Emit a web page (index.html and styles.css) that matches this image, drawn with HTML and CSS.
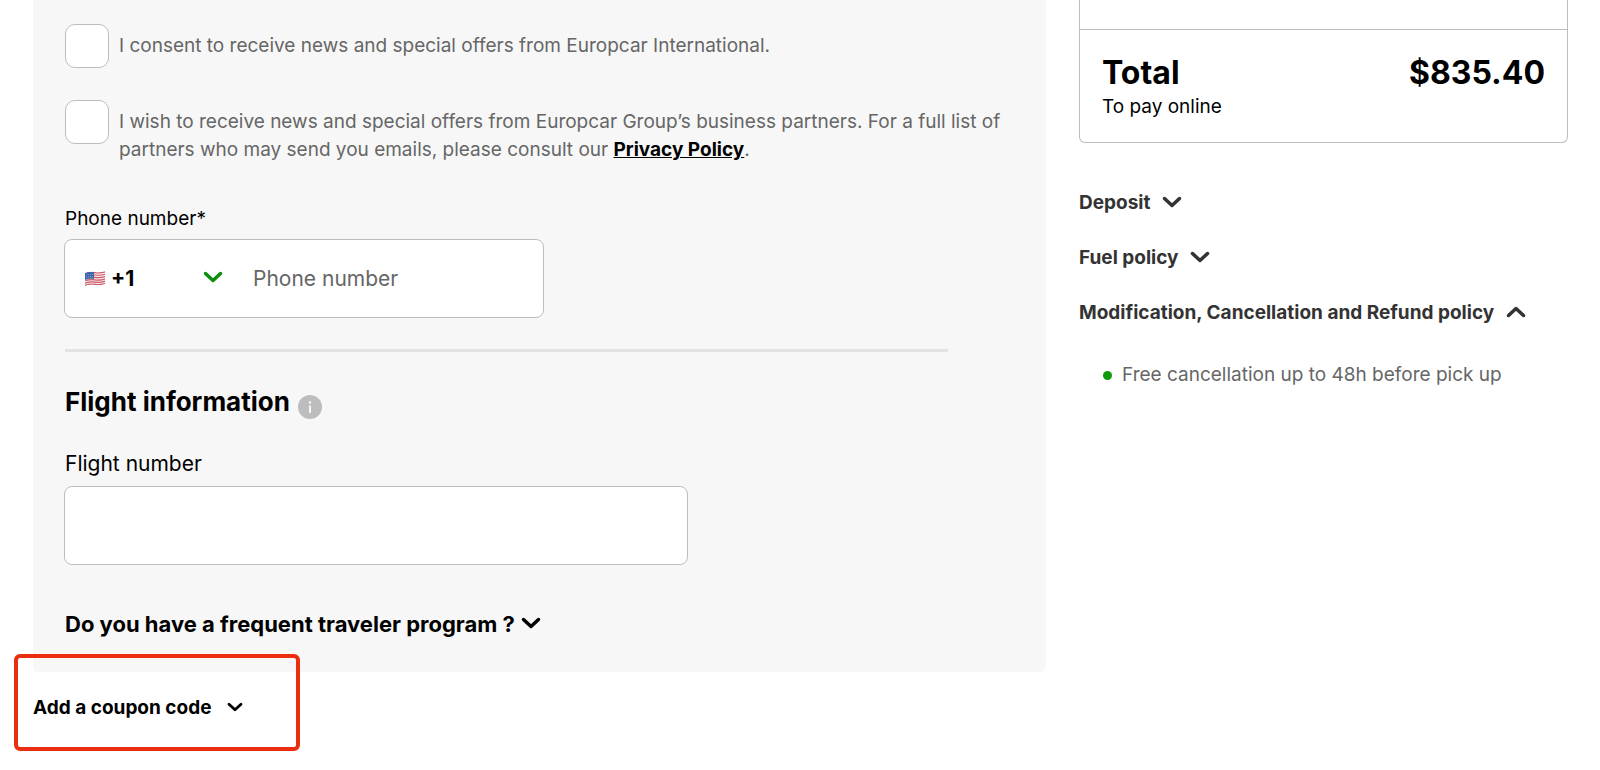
FILE: index.html
```html
<!DOCTYPE html>
<html lang="en">
<head>
    <meta charset="UTF-8">
    <meta name="viewport" content="width=device-width, initial-scale=1.0">
    <title>Driver details - Europcar</title>
    <link rel="stylesheet" href="styles.css">
</head>
<body>
    <div class="page">
        <main>
            <form class="details-panel">
                <div class="consent">
                    <input type="checkbox" id="consentNews">
                    <label for="consentNews">I consent to receive news and special offers from Europcar International.</label>
                </div>
                <div class="consent">
                    <input type="checkbox" id="consentPartners">
                    <label for="consentPartners">I wish to receive news and special offers from Europcar Group’s business partners. For a full list of partners who may send you emails, please consult our <a href="#">Privacy Policy</a>.</label>
                </div>

                <label class="phone-label" for="phone">Phone number*</label>
                <div class="phone-field">
                    <div class="country">
                        <svg class="flag" viewBox="0 0 20 15" aria-hidden="true">
                            <clipPath id="wave"><path d="M0 2 Q5 0 10 1 T20 0 V13 Q15 15 10 14 T0 15 Z"/></clipPath>
                            <g clip-path="url(#wave)">
                                <rect width="20" height="15" fill="#f3e9ec"/>
                                <path d="M0 2.6 Q5 .8 10 1.6 T20 .8 M0 5 Q5 3.2 10 4 T20 3.2 M0 7.4 Q5 5.6 10 6.4 T20 5.6 M0 9.8 Q5 8 10 8.8 T20 8 M0 12.2 Q5 10.4 10 11.2 T20 10.4 M0 14.4 Q5 12.6 10 13.4 T20 12.6" fill="none" stroke="#cf5b68" stroke-width="1.2"/>
                                <path d="M0 1.5 Q4 .3 9 1 V8 Q4 7.4 0 9 Z" fill="#3f67a8"/>
                                <path d="M1.5 3.5 H8 M1.5 5.5 H8 M1.5 7 H8" stroke="#9db3d6" stroke-width=".7" stroke-dasharray=".8 1"/>
                            </g>
                        </svg>
                        <select aria-label="Country code">
                            <option>+1</option>
                            <option>+33</option>
                            <option>+44</option>
                        </select>
                        <svg class="chevron green" viewBox="0 0 20 12" aria-hidden="true"><path d="M2.5 2.5 L10 9.5 L17.5 2.5"/></svg>
                    </div>
                    <input type="tel" id="phone" placeholder="Phone number">
                </div>

                <hr>

                <div class="section-title">
                    <h2>Flight information</h2>
                    <button type="button" class="info-button" aria-label="More information">
                        <svg viewBox="0 0 24 24" aria-hidden="true">
                            <circle cx="12" cy="12" r="12" fill="#bdbdbd"/>
                            <circle cx="12" cy="7.5" r="1.2" fill="#f7f7f7"/>
                            <rect x="11" y="10.5" width="2" height="7.5" fill="#f7f7f7"/>
                        </svg>
                    </button>
                </div>
                <label class="flight-label" for="flight">Flight number</label>
                <input type="text" class="flight-input" id="flight">

                <button type="button" class="toggle frequent">
                    Do you have a frequent traveler program ?
                    <svg class="chevron" viewBox="0 0 20 12" aria-hidden="true"><path d="M2.5 2.5 L10 9.5 L17.5 2.5"/></svg>
                </button>
            </form>

            <div class="coupon">
                <button type="button" class="toggle">
                    Add a coupon code
                    <svg class="chevron small" viewBox="0 0 20 12" aria-hidden="true"><path d="M2.5 2.5 L10 9.5 L17.5 2.5"/></svg>
                </button>
            </div>
        </main>

        <aside>
            <div class="summary-card">
                <div class="total-section">
                    <div class="total-row">
                        <span>Total</span>
                        <span>$835.40</span>
                    </div>
                    <p>To pay online</p>
                </div>
            </div>

            <div class="policies">
                <button type="button" class="toggle">
                    Deposit
                    <svg class="chevron" viewBox="0 0 20 12" aria-hidden="true"><path d="M2.5 2.5 L10 9.5 L17.5 2.5"/></svg>
                </button>
                <button type="button" class="toggle">
                    Fuel policy
                    <svg class="chevron" viewBox="0 0 20 12" aria-hidden="true"><path d="M2.5 2.5 L10 9.5 L17.5 2.5"/></svg>
                </button>
                <button type="button" class="toggle" aria-expanded="true">
                    Modification, Cancellation and Refund policy
                    <svg class="chevron" viewBox="0 0 20 12" aria-hidden="true"><path d="M2.5 9.5 L10 2.5 L17.5 9.5"/></svg>
                </button>
            </div>
            <ul class="policy-list">
                <li>Free cancellation up to 48h before pick up</li>
            </ul>
        </aside>
    </div>
</body>
</html>
```
FILE: styles.css
```css
* {
    margin: 0;
    padding: 0;
    box-sizing: border-box;
}

body {
    font-family: Inter, Arial, sans-serif;
    font-size: 19px;
    line-height: 28px;
    color: #000;
    background: #fff;
}

button,
input,
select {
    font: inherit;
    color: inherit;
}

button {
    background: none;
    border: none;
    cursor: pointer;
}

.page {
    display: grid;
    grid-template-columns: 29fr 14fr;
    gap: 33px;
    align-items: start;
    padding: 0 32px 0 33px;
}

/* Left column */
.details-panel {
    background: #f7f7f7;
    border-radius: 0 0 6px 6px;
    padding: 24px 32px 34px;
}

.consent {
    display: flex;
    align-items: flex-start;
    gap: 10px;
    margin-bottom: 32px;
    color: #666;
}

.consent input {
    appearance: none;
    flex: none;
    width: 44px;
    height: 44px;
    background: #fff;
    border: 1px solid #bdbdbd;
    border-radius: 10px;
}

.consent input:checked {
    background: #008a00;
}

.consent label {
    padding-top: 8px;
}

.consent a {
    color: #000;
    font-weight: bold;
}

.phone-label {
    display: block;
    margin: 41px 0 6px;
}

.phone-field {
    display: flex;
    max-width: 480px;
    height: 79px;
    margin-left: -1px;
    background: #fff;
    border: 1px solid #bdbdbd;
    border-radius: 8px;
    font-size: 21px;
}

.country {
    display: flex;
    align-items: center;
    width: 158px;
    padding-left: 20px;
}

.flag {
    width: 20px;
    height: 15px;
    margin-right: 6px;
}

.country select {
    appearance: none;
    flex: 1;
    min-width: 0;
    border: none;
    background: none;
    font-weight: bold;
}

.phone-field input {
    flex: 1;
    min-width: 0;
    margin-left: 30px;
    border: none;
    background: none;
}

.phone-field input::placeholder {
    color: #666;
}

hr {
    width: 93%;
    height: 3px;
    margin: 31px 0 32px;
    border: none;
    background: #e3e3e3;
}

.section-title {
    display: flex;
    align-items: center;
    gap: 8px;
    margin-bottom: 30px;
}

.section-title h2 {
    font-size: 26px;
    line-height: 36px;
}

.info-button {
    display: flex;
    width: 24px;
    height: 24px;
    margin-top: 10px;
}

.flight-label {
    display: block;
    margin-bottom: 8px;
    font-size: 21px;
}

.flight-input {
    display: block;
    width: 100%;
    max-width: 624px;
    height: 79px;
    margin-left: -1px;
    padding: 0 20px;
    background: #fff;
    border: 1px solid #bdbdbd;
    border-radius: 8px;
}

.toggle {
    display: flex;
    align-items: center;
    gap: 12px;
    font-weight: bold;
    text-align: left;
}

.frequent {
    gap: 6px;
    margin-top: 45px;
    font-size: 22px;
}

.chevron {
    flex: none;
    width: 20px;
    height: 12px;
    margin-bottom: 3px;
    fill: none;
    stroke: currentColor;
    stroke-width: 3.5;
    stroke-linecap: round;
    stroke-linejoin: round;
}

.chevron.green {
    color: #0c8f0c;
}

.chevron.small {
    width: 16px;
    height: 10px;
}

.coupon {
    position: relative;
    padding: 22px 0 48px;
}

.coupon .toggle {
    gap: 16px;
}

.coupon::before {
    content: "";
    position: absolute;
    top: -18px;
    left: -19px;
    width: 278px;
    height: 89px;
    border: 4px solid #eb2d10;
    border-radius: 6px;
    pointer-events: none;
}

/* Right column */
.summary-card {
    padding-top: 29px;
    border: 1px solid #bdbdbd;
    border-top: none;
    border-radius: 0 0 6px 6px;
}

.total-section {
    padding: 23px 22px 21px;
    border-top: 1px solid #bdbdbd;
}

.total-row {
    display: flex;
    justify-content: space-between;
    font-size: 32px;
    line-height: 40px;
    font-weight: bold;
}

.policies {
    display: flex;
    flex-direction: column;
    align-items: flex-start;
    gap: 27px;
    margin-top: 46px;
    color: #333;
}

.policy-list {
    margin: 34px 0 0 24px;
    color: #666;
    list-style: none;
}

.policy-list li {
    display: flex;
    align-items: center;
    gap: 10px;
}

.policy-list li::before {
    content: "";
    width: 9px;
    height: 9px;
    border-radius: 50%;
    background: #0c9a0c;
}
```
